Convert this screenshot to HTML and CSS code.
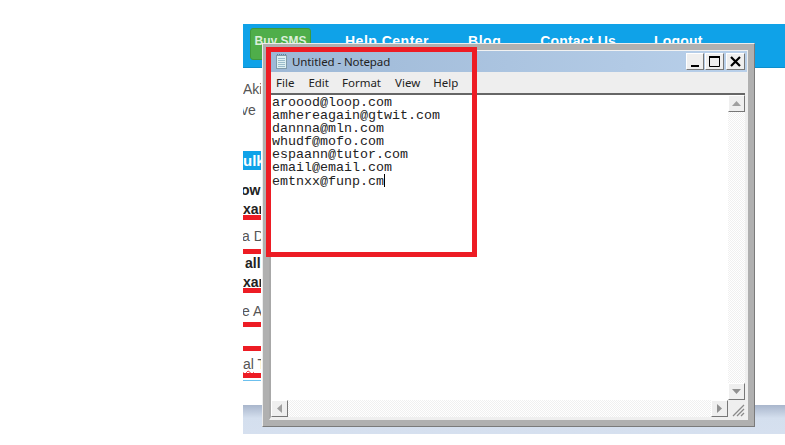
FILE: index.html
```html
<!DOCTYPE html>
<html lang="en">
<head>
<meta charset="utf-8">
<title>Untitled - Notepad</title>
<link rel="stylesheet" href="styles.css">
</head>
<body>
<div class="site">
  <nav class="nav">
    <a class="buy">Buy SMS</a>
    <a class="link help">Help Center</a>
    <a class="link blog">Blog</a>
    <a class="link contact">Contact Us</a>
    <a class="link logout">Logout</a>
  </nav>
  <div class="side">
    <p class="txt t-aki">Aki</p>
    <p class="txt t-ve">ve</p>
    <p class="bulk">ulk</p>
    <p class="bold t-ow">ow</p>
    <p class="bold t-xa">xam</p>
    <div class="bar"></div>
    <p class="txt t-ad">a D</p>
    <div class="bar b-ad"></div>
    <p class="bold t-all">all</p>
    <p class="bold t-xa2">xam</p>
    <div class="bar"></div>
    <p class="txt t-ea">e A</p>
    <div class="bar b-ea"></div>
    <div class="bar b-empty"></div>
    <p class="txt t-al"><span class="squiggle">al</span> T</p>
    <div class="bar"></div>
    <div class="blue-line"></div>
  </div>
  <div class="footer"></div>
</div>

<section class="win">
  <div class="win-inner">
    <header class="title">
      <svg class="app-icon" width="13" height="15" viewBox="0 0 13 15">
        <rect x="1.5" y="1.5" width="10" height="13" fill="#dff0f2" stroke="#7f9aa8"/>
        <path d="M2 0.5h9" stroke="#5a7fa0" stroke-dasharray="1 1"/>
        <path d="M3 4.5h7M3 6.5h7M3 8.5h7M3 10.5h7M3 12.5h7" stroke="#9bbccb"/>
      </svg>
      <span class="title-text">Untitled - Notepad</span>
      <div class="controls">
        <button class="ctl ctl-min"><svg width="8" height="3" viewBox="0 0 8 3"><rect width="8" height="2" y="1" fill="#000"/></svg></button>
        <button class="ctl ctl-max"><svg width="11" height="11" viewBox="0 0 11 11"><path d="M.5 1h10v9.500H.5z" fill="none" stroke="#000"/><path d="M0 1h11" stroke="#000" stroke-width="2"/></svg></button>
        <button class="ctl ctl-close"><svg width="11" height="11" viewBox="0 0 11 11"><path d="M1 1l9 9M10 1l-9 9" stroke="#000" stroke-width="2.200"/></svg></button>
      </div>
    </header>
    <div class="menu">
      <span class="m-file">File</span>
      <span class="m-edit">Edit</span>
      <span class="m-format">Format</span>
      <span class="m-view">View</span>
      <span class="m-help">Help</span>
    </div>
    <div class="client">
      <div class="text">aroood@loop.com
amhereagain@gtwit.com
dannna@mln.com
whudf@mofo.com
espaann@tutor.com
email@email.com
emtnxx@funp.cm<span class="caret"></span></div>
      <div class="vscroll">
        <div class="sbtn"><svg width="9" height="5" viewBox="0 0 9 5"><path d="M4.500 0L9 5H0z" fill="#a0a0a0"/></svg></div>
        <div class="sbtn"><svg width="9" height="5" viewBox="0 0 9 5"><path d="M4.500 5L9 0H0z" fill="#909090"/></svg></div>
      </div>
      <div class="hscroll">
        <div class="sbtn"><svg width="5" height="9" viewBox="0 0 5 9"><path d="M0 4.500L5 0v9z" fill="#a0a0a0"/></svg></div>
        <div class="sbtn"><svg width="5" height="9" viewBox="0 0 5 9"><path d="M5 4.500L0 0v9z" fill="#909090"/></svg></div>
      </div>
      <div class="grip"><svg width="17" height="17" viewBox="0 0 17 17"><path d="M16 5L5 16M16 9l-7 7M16 13l-3 3" stroke="#8a8a8a" stroke-width="1.300" fill="none"/></svg></div>
    </div>
  </div>
</section>
<div class="highlight"></div>
</body>
</html>
```
FILE: styles.css
```css
* { box-sizing: border-box; }
html, body { margin: 0; padding: 0; }
body {
  width: 785px;
  height: 445px;
  overflow: hidden;
  background: #fff;
  font-family: "Liberation Sans", Arial, sans-serif;
}
p { margin: 0; }

.site { margin: 24px 0 0 243px; }

.nav {
  display: flex;
  align-items: flex-start;
  height: 44px;
  background: #0fa2e8;
  border-bottom: 1px solid #0d8fcc;
  padding: 4px 0 0 7px;
}
.buy {
  width: 61px;
  height: 32px;
  background: #4fae4a;
  border: 1px solid #3f9a3c;
  border-radius: 3px;
  color: #dcefdc;
  font-size: 12px;
  font-weight: bold;
  line-height: 24px;
  text-align: center;
}
.link {
  color: #fff;
  font-size: 14px;
  font-weight: bold;
  letter-spacing: .5px;
  line-height: 18px;
  margin-top: 4px;
  white-space: nowrap;
}
.help { margin-left: 34px; }
.blog { margin-left: 39px; }
.contact { margin-left: 39px; letter-spacing: .2px; }
.logout { margin-left: 38px; letter-spacing: .2px; }

.side { width: 18px; overflow: hidden; white-space: nowrap; }
.txt { color: #555; font-size: 14px; height: 18px; line-height: 18px; }
.bold { color: #222; font-size: 14px; font-weight: bold; line-height: 18px; height: 18px; }
.bar { height: 5px; background: #ed1c24; }

.t-aki { margin-top: 12px; }
.t-ve { margin-top: 3px; text-indent: -2px; }
.bulk {
  margin-top: 32px;
  height: 19px;
  background: #0fa2e8;
  color: #fff;
  font-size: 15px;
  font-weight: bold;
  line-height: 19px;
}
.t-ow { margin-top: 11px; text-indent: -2px; }
.t-xa { margin-top: 3px; height: 13px; line-height: 15px; }
.t-ad { margin-top: 7px; text-indent: -1px; }
.b-ad { margin-top: 4px; }
.t-all { margin-top: 0; text-indent: 2px; }
.t-xa2 { margin-top: 3px; height: 13px; line-height: 15px; }
.t-ea { margin-top: 9px; text-indent: -1px; }
.b-ea { margin-top: 2px; }
.b-empty { margin-top: 19px; }
.t-al { margin-top: 4px; }
.squiggle { text-decoration: underline wavy #ed1c24 1px; }
.blue-line { height: 1px; margin-top: 2px; background: #6cc0ee; }

.footer {
  margin-top: 24px;
  height: 29px;
  background: linear-gradient(#a9b6cc, #d4dfee 45%, #d6e0ef);
}

/* Notepad window floating over the page */
.win {
  position: absolute;
  left: 262px;
  top: 43px;
  width: 493px;
  height: 384px;
  background: #b0b0b0;
  border-top: 1px solid #ececec;
  border-left: 1px solid #ececec;
  border-right: 1px solid #7a7a7a;
  border-bottom: 1px solid #7a7a7a;
  padding: 6px;
}
.win-inner {
  height: 100%;
  display: flex;
  flex-direction: column;
  background: #efefef;
  border-top: 1px solid #f2f2f2;
  border-left: 2px solid #a8a8a8;
  border-right: 1px solid #efefef;
  border-bottom: 3px solid #efefef;
}
.title {
  display: flex;
  align-items: center;
  height: 21px;
  flex: none;
  padding-left: 4px;
  background: linear-gradient(90deg, #9db8d6, #b9d0ea);
}
.app-icon { flex: none; }
.title-text {
  margin-left: 4px;
  font-family: "Noto Sans", sans-serif;
  font-size: 11.500px;
  letter-spacing: -.1px;
  color: #222;
}
.controls { display: flex; margin-left: auto; margin-right: 2px; }
.ctl {
  display: flex;
  align-items: center;
  justify-content: center;
  width: 19px;
  height: 17px;
  padding: 0;
  background: #efefef;
  border: 1px solid;
  border-color: #fff #777 #777 #fff;
}
.ctl-min { width: 18px; margin-right: 1px; }
.ctl-close { margin-left: 2px; }
.ctl-min svg { margin-top: 7px; }

.menu {
  display: flex;
  align-items: center;
  height: 21px;
  flex: none;
  padding-left: 5px;
  background: #eeeeee;
  font-family: "Noto Sans", sans-serif;
  font-size: 11.500px;
  color: #222;
}
.m-edit { margin-left: 14px; }
.m-format { margin-left: 13px; }
.m-view { margin-left: 14px; }
.m-help { margin-left: 13px; }

.client {
  flex: 1;
  min-height: 0;
  display: grid;
  grid-template-columns: 1fr 17px;
  grid-template-rows: 1fr 17px;
  margin-right: 2px;
  border-top: 2px solid #666;
  background: #fff;
}
.text {
  padding: 1px 0 0 1px;
  font-family: "Liberation Mono", monospace;
  font-size: 13.330px;
  line-height: 13px;
  color: #222;
  white-space: pre;
  overflow: hidden;
}
.caret {
  display: inline-block;
  width: 1px;
  height: 13px;
  background: #000;
  vertical-align: -2px;
}
.vscroll, .hscroll {
  display: flex;
  justify-content: space-between;
  background: repeating-conic-gradient(#f0f0f0 0 25%, #fff 0 50%) 0 0 / 2px 2px;
}
.vscroll { flex-direction: column; }
.sbtn {
  flex: none;
  display: flex;
  align-items: center;
  justify-content: center;
  width: 17px;
  height: 17px;
  background: #efefef;
  border: 1px solid;
  border-color: #fff #777 #777 #fff;
}
.grip { background: #efefef; line-height: 0; }

.highlight {
  position: absolute;
  left: 266px;
  top: 47px;
  width: 211px;
  height: 210px;
  border: 5px solid #ed1c24;
}
```
